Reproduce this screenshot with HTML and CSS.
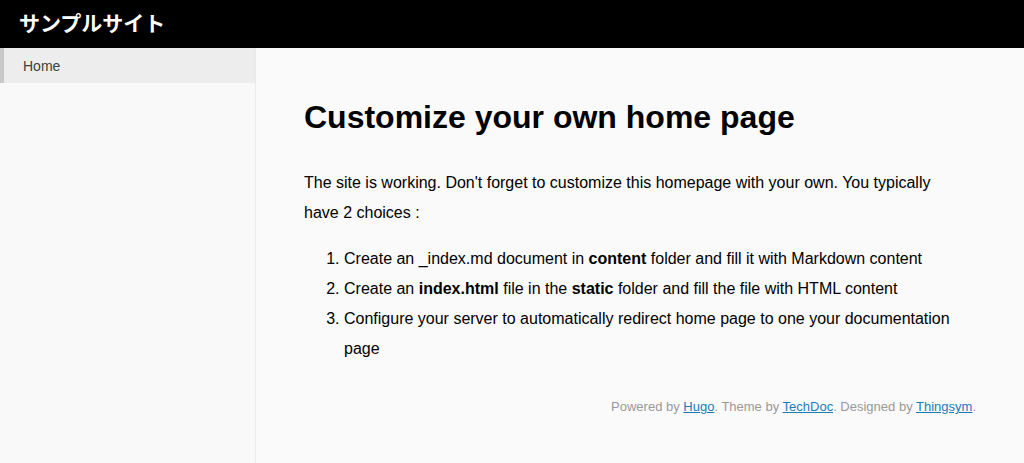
FILE: index.html
```html
<!DOCTYPE html>
<html lang="ja">
<head>
<meta charset="utf-8">
<meta name="viewport" content="width=device-width, initial-scale=1">
<title>サンプルサイト</title>
<link rel="stylesheet" href="styles.css">
</head>
<body>
<div class="container">
<header class="global-header"><a class="site-title" href="#">サンプルサイト</a></header>
<div class="content-container">
<nav class="sidebar" aria-label="Main">
<ul class="menu"><li><a class="menu-link active" href="#">Home</a></li></ul>
</nav>
<main class="main">
<h1 class="title">Customize your own home page</h1>
<p class="text">The site is working. Don't forget to customize this homepage with your own. You typically have 2 choices :</p>
<ol class="list">
<li>Create an _index.md document in <strong>content</strong> folder and fill it with Markdown content</li>
<li>Create an <strong>index.html</strong> file in the <strong>static</strong> folder and fill the file with HTML content</li>
<li>Configure your server to automatically redirect home page to one your documentation page</li>
</ol>
<footer class="powered">Powered by <a href="#">Hugo</a>. Theme by <a href="#">TechDoc</a>. Designed by <a href="#">Thingsym</a>.</footer>
</main>
</div>
</div>
</body>
</html>
```
FILE: styles.css
```css
* { box-sizing: border-box; }
body {
  margin: 0;
  background: #fafafa;
  color: #000;
  font-family: "Liberation Sans", "Noto Sans CJK JP", sans-serif;
  font-size: 16px;
  line-height: 30px;
}
.container {
  display: flex;
  flex-direction: column;
  min-height: 100vh;
}
.global-header {
  display: flex;
  align-items: center;
  height: 48px;
  padding: 0 19px;
  background: #000;
}
.site-title {
  color: #fff;
  font-size: 21px;
  font-weight: 700;
  text-decoration: none;
}
.content-container {
  display: flex;
  flex: 1;
}
.sidebar {
  flex: 0 0 25%;
  border-right: 1px solid #ebebeb;
  background: #f9f9f9;
}
.menu {
  margin: 0;
  padding: 0;
  list-style: none;
}
.menu-link {
  display: block;
  padding: 7px 19px 5px;
  color: #404040;
  font-size: 14px;
  line-height: 23px;
  text-decoration: none;
}
.menu-link.active {
  border-left: 4px solid #c9c9c9;
  background: #ededed;
}
.main {
  flex: 1;
  min-width: 0;
  padding: 48px;
}
.title {
  margin: 0 0 30px;
  font-size: 32px;
  line-height: 42px;
}
.text {
  margin: 0 0 16px;
  padding-right: 16px;
}
.list {
  margin: 0 0 31px;
  padding-left: 40px;
}
.powered {
  color: #999;
  font-size: 13px;
  line-height: 24px;
  text-align: right;
}
.powered a { color: #1d7ab8; }
```
